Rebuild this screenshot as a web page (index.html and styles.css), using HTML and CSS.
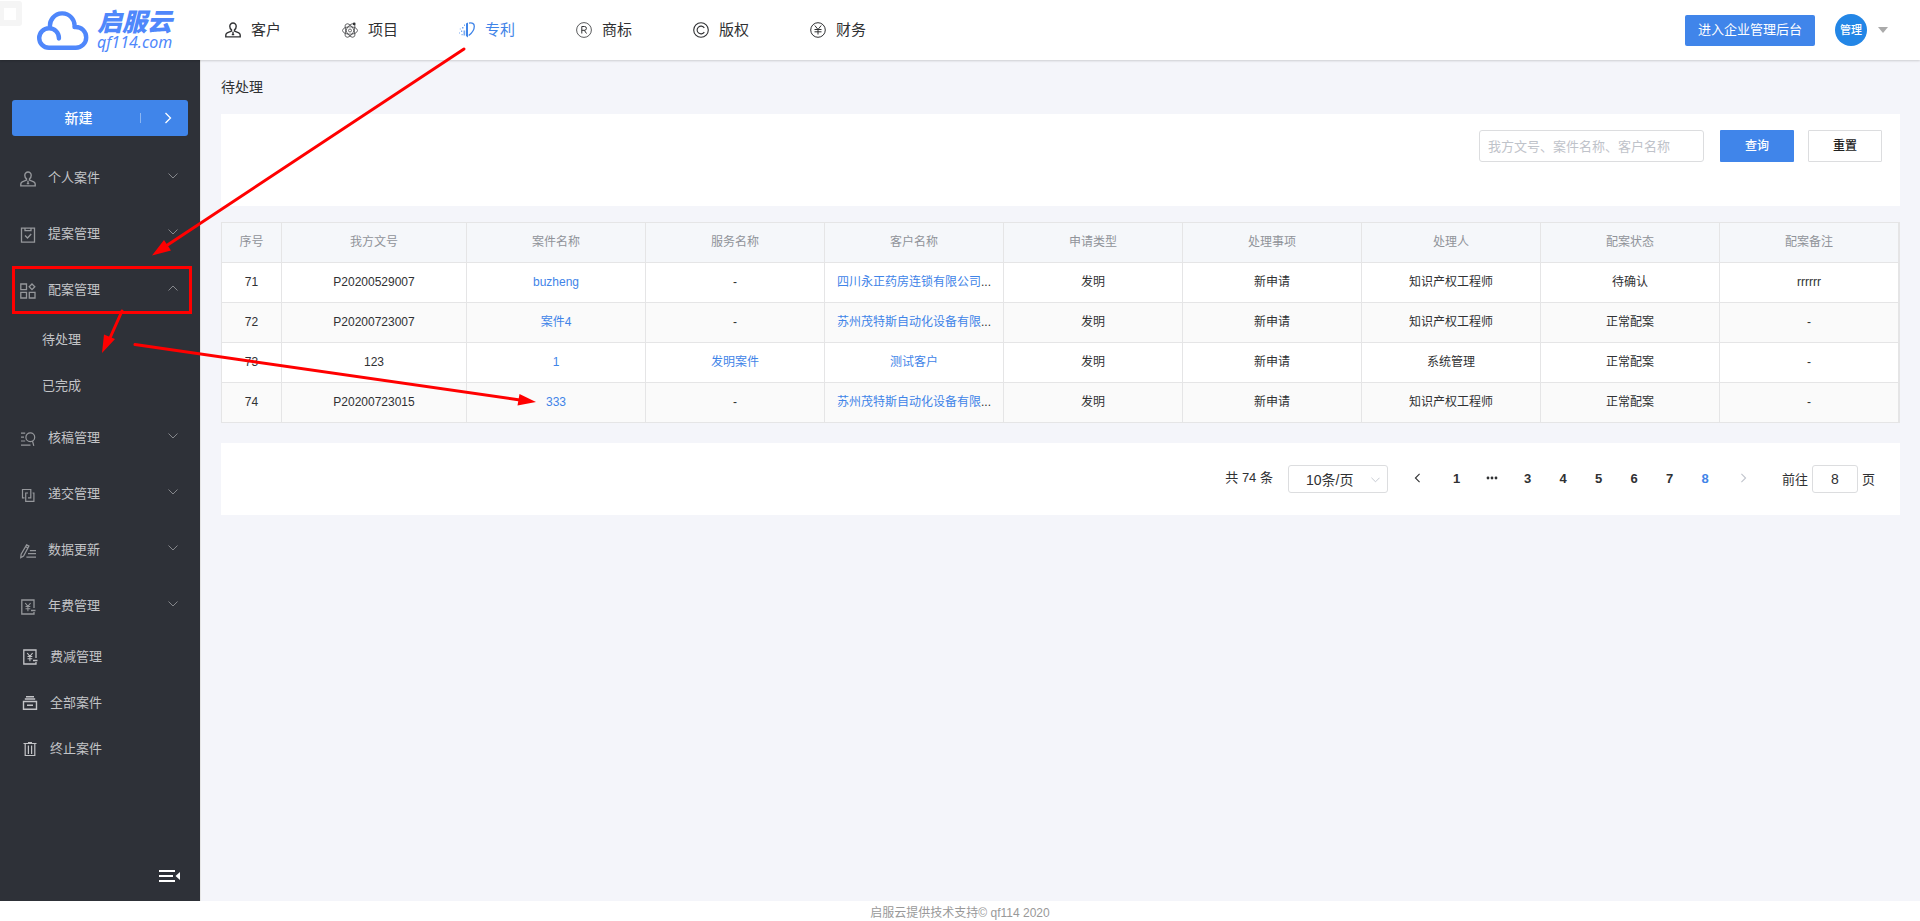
FILE: index.html
```html
<!DOCTYPE html>
<html lang="zh-CN">
<head>
<meta charset="utf-8">
<title>启服云 - 待处理</title>
<link rel="stylesheet" href="styles.css">
</head>
<body>
<svg class="sprite" aria-hidden="true">
  <symbol id="i-user" viewBox="0 0 16 16"><path d="M8 1a3.200 3.200 0 0 0-3.200 3.200c0 1.600.7 2.900 1.700 3.700v1.200L2.200 10.800C1.200 11.300.8 12 .8 13v1.900h14.400V13c0-1-.4-1.700-1.400-2.200L9.500 9.100V7.900c1-.8 1.700-2.100 1.700-3.700A3.200 3.200 0 0 0 8 1zM8 9.800v3M6.800 12.600h2.400" fill="none" stroke="currentColor" stroke-width="1.400"/></symbol>
  <symbol id="i-atom" viewBox="0 0 16 16"><g fill="none" stroke="currentColor" stroke-width=".7"><ellipse cx="8" cy="8.500" rx="7.500" ry="3.700"/><ellipse cx="8" cy="8.500" rx="7.500" ry="3.700" transform="rotate(60 8 8.500)"/><ellipse cx="8" cy="8.500" rx="7.500" ry="3.700" transform="rotate(120 8 8.500)"/><circle cx="8" cy="8.500" r="1.500"/></g><circle cx="12.200" cy="1.900" r="1.400" fill="currentColor"/></symbol>
  <symbol id="i-patent" viewBox="0 0 16 16"><path d="M7 1.500L9 .5v15L7 14z" fill="currentColor"/><path d="M10 1.200c3-.8 5.300.3 5.300 3 0 3.500-2.300 6.800-5.600 9.300" fill="none" stroke="currentColor" stroke-width="1.300"/><path d="M4.500 8.500h1.700v5H4.500zM3 5h1.500v1.500H3zM5 2.500h1V4H5zM2 8.500h1.200V10H2zM0 10.500h1v1H0zM2.500 12h1.200v1.200H2.500zM.8 6.500h.9v.9H.8z" fill="currentColor" opacity=".7"/></symbol>
  <symbol id="i-reg" viewBox="0 0 16 16"><g fill="none" stroke="currentColor"><circle cx="8" cy="8" r="7.400" stroke-width=".8"/><path d="M5.800 11.500v-7H8.500a1.900 1.900 0 0 1 0 3.800H5.800M8.300 8.300l2.200 3.200" stroke-width="1"/></g></symbol>
  <symbol id="i-copy" viewBox="0 0 16 16"><g fill="none" stroke="currentColor" stroke-width="1.100"><circle cx="8" cy="8" r="7.300"/><path d="M11.300 5.900a3.900 3.900 0 1 0 0 4.200"/></g></symbol>
  <symbol id="i-yen" viewBox="0 0 16 16"><g fill="none" stroke="currentColor" stroke-width="1"><circle cx="8" cy="8" r="7.300"/><path d="M4.800 3.500L8 7.500l3.200-4M8 7.500v5M4.500 7.500h7M4.500 9.800h7"/></g></symbol>
  <symbol id="i-clip" viewBox="0 0 16 16"><g fill="none" stroke="currentColor" stroke-width="1.300"><path d="M1.500 1.200h13v14h-13zM5 1.200v2.500h6V1.200"/><path d="M5 8.500l2.500 2.500L11.200 7"/></g></symbol>
  <symbol id="i-grid" viewBox="0 0 16 16"><g fill="none" stroke="currentColor" stroke-width="1.300"><path d="M.8 1h5.700v5.700H.8zM.8 9.300h5.700V15H.8zM9.300 9.300H15V15H9.300zM12 1l2.800 2.800L12 6.600 9.200 3.800z"/></g></symbol>
  <symbol id="i-review" viewBox="0 0 16 16"><g fill="none" stroke="currentColor" stroke-width="1.200"><circle cx="10.300" cy="6.200" r="4.400"/><path d="M1 2.200h4.200M1 6.200h3M1 10h4.200M1 14.200h9.500M12.500 10l1.300 4.800"/></g></symbol>
  <symbol id="i-send" viewBox="0 0 16 16"><path d="M4.500 10.800h-2V2.500h8.300v8.300H8M8 6H5.700v8.300h8.200V6h-1.300" fill="none" stroke="currentColor" stroke-width="1.200"/></symbol>
  <symbol id="i-edit" viewBox="0 0 17 16"><g fill="none" stroke="currentColor" stroke-width="1.300"><path d="M7 1.500l2.500 1.300-5.700 10.500L.8 15l.4-3.500zM6 3.500l2.500 1.300"/><path d="M10.500 7.500H17M8.500 10.800H17M6.800 14.400H17"/></g></symbol>
  <symbol id="i-fee" viewBox="0 0 16 16"><g fill="none" stroke="currentColor" stroke-width="1.300"><path d="M14 9V1H1.800v14H14v-2M11 11.500h4.500"/><path d="M5.200 4l2.700 3.300L10.600 4M7.900 7.300v5M5.500 7.500h4.800M5.500 9.700h4.800" stroke-width="1.100"/></g></symbol>
  <symbol id="i-all" viewBox="0 0 16 16"><path d="M4 1h8v1.500H4zM2.800 3.200h10.400v1.500H2.800z" fill="currentColor"/><path d="M1.500 6.500h13v7.800h-13zM5 10.300h6" fill="none" stroke="currentColor" stroke-width="1.400"/></symbol>
  <symbol id="i-trash" viewBox="0 0 16 16"><path d="M1.500 2.500h13M3.200 2.500v12h9.600v-12M6.400 4.500v8.500M9.600 4.500v8.500M6 1.500h4" fill="none" stroke="currentColor" stroke-width="1.200"/></symbol>
  <symbol id="i-down" viewBox="0 0 10 10"><path d="M.5 2.500L5 7l4.500-4.500" fill="none" stroke="currentColor"/></symbol>
  <symbol id="i-up" viewBox="0 0 10 10"><path d="M.5 7.500L5 3l4.500 4.500" fill="none" stroke="currentColor"/></symbol>
  <symbol id="i-right" viewBox="0 0 10 12"><path d="M2.500 1l5 5-5 5" fill="none" stroke="currentColor" stroke-width="1.300"/></symbol>
  <symbol id="i-left" viewBox="0 0 10 12"><path d="M7.500 1l-5 5 5 5" fill="none" stroke="currentColor" stroke-width="1.300"/></symbol>
</svg>

<header class="header">
  <span class="badge"></span>
  <a class="logo" href="#" aria-label="启服云">
    <svg class="logo-cloud" viewBox="0 0 53 40"><path d="M22.900 28.500A9.800 9.800 0 0 0 13 18.200a9.800 9.800 0 0 0 0 19.600H39.800a10.400 10.400 0 0 0 0-20.800H38.500A12.300 12.300 0 1 0 14.100 17.500" fill="none" stroke="#4f87fb" stroke-width="4.400" stroke-linecap="round" stroke-linejoin="round"/></svg>
    <span class="logo-text"><span class="logo-name">启服云</span><span class="logo-domain">qf114.com</span></span>
  </a>
  <nav class="nav">
    <a href="#"><svg><use href="#i-user"/></svg>客户</a>
    <a href="#"><svg><use href="#i-atom"/></svg>项目</a>
    <a href="#" class="active"><svg><use href="#i-patent"/></svg>专利</a>
    <a href="#"><svg><use href="#i-reg"/></svg>商标</a>
    <a href="#"><svg><use href="#i-copy"/></svg>版权</a>
    <a href="#"><svg><use href="#i-yen"/></svg>财务</a>
  </nav>
  <button class="btn btn-admin" type="button">进入企业管理后台</button>
  <button class="account" type="button"><span class="avatar">管理</span><span class="caret"></span></button>
</header>

<div class="layout">
  <aside class="sidebar">
    <button class="create" type="button"><span class="create-label">新建</span><span class="create-more"><svg><use href="#i-right"/></svg></span></button>
    <nav class="menu">
      <a href="#" class="item"><svg class="icon"><use href="#i-user"/></svg>个人案件<svg class="arrow"><use href="#i-down"/></svg></a>
      <a href="#" class="item"><svg class="icon"><use href="#i-clip"/></svg>提案管理<svg class="arrow"><use href="#i-down"/></svg></a>
      <a href="#" class="item"><svg class="icon"><use href="#i-grid"/></svg>配案管理<svg class="arrow"><use href="#i-up"/></svg></a>
      <a href="#" class="sub">待处理</a>
      <a href="#" class="sub">已完成</a>
      <a href="#" class="item"><svg class="icon"><use href="#i-review"/></svg>核稿管理<svg class="arrow"><use href="#i-down"/></svg></a>
      <a href="#" class="item"><svg class="icon"><use href="#i-send"/></svg>递交管理<svg class="arrow"><use href="#i-down"/></svg></a>
      <a href="#" class="item"><svg class="icon"><use href="#i-edit"/></svg>数据更新<svg class="arrow"><use href="#i-down"/></svg></a>
      <a href="#" class="item"><svg class="icon"><use href="#i-fee"/></svg>年费管理<svg class="arrow"><use href="#i-down"/></svg></a>
      <a href="#" class="item single"><svg class="icon"><use href="#i-fee"/></svg>费减管理</a>
      <a href="#" class="item single"><svg class="icon"><use href="#i-all"/></svg>全部案件</a>
      <a href="#" class="item single"><svg class="icon"><use href="#i-trash"/></svg>终止案件</a>
    </nav>
    <button class="collapse" type="button" aria-label="收起菜单"><svg viewBox="0 0 21 12"><path d="M0 1h16M0 6h14M0 11h16" stroke="#fff" stroke-width="2"/><path d="M21 2v8l-4.500-4z" fill="#fff"/></svg></button>
  </aside>

  <main class="main">
    <h1 class="title">待处理</h1>
    <form class="panel search">
      <input class="search-input" type="text" aria-label="搜索" placeholder="我方文号、案件名称、客户名称">
      <button class="btn btn-query" type="button">查询</button>
      <button class="btn btn-reset" type="reset">重置</button>
    </form>

    <table class="table">
      <colgroup><col class="c-no"><col class="c-ref"><col><col><col><col><col><col><col><col></colgroup>
      <thead>
        <tr><th>序号</th><th>我方文号</th><th>案件名称</th><th>服务名称</th><th>客户名称</th><th>申请类型</th><th>处理事项</th><th>处理人</th><th>配案状态</th><th>配案备注</th></tr>
      </thead>
      <tbody>
        <tr><td>71</td><td>P20200529007</td><td><a href="#">buzheng</a></td><td>-</td><td><a href="#">四川永正药房连锁有限公司</a>...</td><td>发明</td><td>新申请</td><td>知识产权工程师</td><td>待确认</td><td>rrrrrr</td></tr>
        <tr><td>72</td><td>P20200723007</td><td><a href="#">案件4</a></td><td>-</td><td><a href="#">苏州茂特斯自动化设备有限</a>...</td><td>发明</td><td>新申请</td><td>知识产权工程师</td><td>正常配案</td><td>-</td></tr>
        <tr><td>73</td><td>123</td><td><a href="#">1</a></td><td><a href="#">发明案件</a></td><td><a href="#">测试客户</a></td><td>发明</td><td>新申请</td><td>系统管理</td><td>正常配案</td><td>-</td></tr>
        <tr><td>74</td><td>P20200723015</td><td><a href="#">333</a></td><td>-</td><td><a href="#">苏州茂特斯自动化设备有限</a>...</td><td>发明</td><td>新申请</td><td>知识产权工程师</td><td>正常配案</td><td>-</td></tr>
      </tbody>
    </table>

    <div class="panel pager">
      <span class="total">共 74 条</span>
      <span class="size"><select aria-label="每页条数"><option>10条/页</option></select><svg><use href="#i-down"/></svg></span>
      <button class="step" type="button" aria-label="上一页"><svg><use href="#i-left"/></svg></button>
      <div class="pages">
        <button type="button">1</button>
        <button type="button" aria-label="更多"><svg viewBox="0 0 12 4"><circle cx="2" cy="2" r="1.400"/><circle cx="6" cy="2" r="1.400"/><circle cx="10" cy="2" r="1.400"/></svg></button>
        <button type="button">3</button>
        <button type="button">4</button>
        <button type="button">5</button>
        <button type="button">6</button>
        <button type="button">7</button>
        <button type="button" class="current">8</button>
      </div>
      <button class="step" type="button" aria-label="下一页" disabled><svg><use href="#i-right"/></svg></button>
      <label class="jump">前往<input type="text" value="8">页</label>
    </div>
  </main>
</div>

<footer class="footer">启服云提供技术支持© qf114 2020</footer>

<svg class="guide" width="560" height="420" viewBox="0 0 560 420" aria-hidden="true">
  <g fill="none" stroke="#f00" stroke-width="3"><path d="M13.500 267.500h177v45h-177z"/><path d="M464 49L166 246M122 311l-12 27M135 344.500l385 55.500" stroke-linecap="round"/></g>
  <path d="M152 255.500l12-15.500 7 10.500zM102 353l2-18.500 11 4.500zM536 402l-16.500-8-2 11.500z" fill="#f00"/>
</svg>
</body>
</html>
```
FILE: styles.css
```css
* { box-sizing: border-box; }
body {
  margin: 0;
  min-height: 100vh;
  position: relative;
  display: flex;
  flex-direction: column;
  background: #fff;
  color: #303133;
  font: 13px/20px "Liberation Sans", "Noto Sans CJK SC", sans-serif;
}
a { color: inherit; text-decoration: none; }
button, input, select { font: inherit; color: inherit; }
button { border: 0; padding: 0; background: none; cursor: pointer; }
svg { display: block; flex: none; }
.sprite { position: absolute; width: 0; height: 0; }

.header {
  position: relative;
  z-index: 1;
  display: flex;
  align-items: center;
  height: 60px;
  padding: 0 32px 0 36px;
  background: #fff;
  box-shadow: 0 1px 2px rgba(0, 0, 0, .16);
}
.badge {
  position: absolute;
  left: 0;
  top: 1px;
  width: 22px;
  height: 25px;
  border: solid #f5f5f5;
  border-width: 7px 6px 6px 4px;
  border-radius: 0 3px 3px 0;
}
.logo { display: flex; width: 189px; gap: 8px; align-items: center; color: #4f87fb; }
.logo-cloud { width: 53px; height: 40px; }
.logo-text { display: flex; flex-direction: column; font-style: italic; }
.logo-name { font-size: 25px; line-height: 24px; font-weight: 900; }
.logo-domain { font: italic 16px/16px "Noto Sans", sans-serif; }
.nav { display: flex; gap: 61px; font-size: 15px; flex: 1; }
.nav a { display: flex; align-items: center; gap: 10px; }
.nav svg { width: 16px; height: 16px; }
.nav .active { color: #3f84e8; }

.btn { border-radius: 2px; background: #4085ea; color: #fff; }
.btn-admin { width: 130px; height: 31px; }
.account { display: flex; align-items: center; gap: 11px; margin-left: 20px; }
.avatar { width: 32px; height: 32px; border-radius: 50%; background: #2386e6; color: #fff; font-size: 11px; line-height: 32px; font-weight: 500; }
.caret { border: solid transparent; border-width: 6px 5px 0; border-top-color: #aaa; }

.layout { flex: 1; display: flex; }
.sidebar { display: flex; flex-direction: column; width: 201px; padding-top: 40px; background: #2e3138; border-right: 1px solid #e6e6e6; color: #c3c4c7; }
.create { display: flex; align-items: center; height: 36px; margin: 0 12px 14px; border-radius: 3px; background: #4085ea; color: #fff; }
.create-label { width: 128px; padding-left: 5px; text-align: center; font-size: 14px; font-weight: 500; }
.create-more { display: flex; flex: 1; height: 10px; align-items: center; padding-left: 22px; border-left: 1px solid #8cb6f2; }
.create svg { width: 10px; height: 12px; }
.menu { flex: 1; }
.item { display: flex; align-items: center; height: 56px; padding: 0 22px 0 20px; gap: 12px; }
.item .icon { width: 16px; height: 16px; margin-top: 2px; color: #95979b; }
.item .arrow { width: 10px; height: 10px; margin: 0 0 4px auto; color: #85878b; }
.single { height: 46px; padding-left: 22px; }
.item.single .icon { margin-top: 0; color: #c3c4c7; }
.sub { display: flex; align-items: center; height: 46px; padding: 0 0 2px 42px; }
.collapse { align-self: flex-end; margin: 0 20px 19px 0; }
.collapse svg { width: 21px; height: 12px; }

.main { flex: 1; min-width: 0; padding: 16px 20px; background: #f4f5fa; }
.title { margin: 0 0 16px; font-size: 14px; line-height: 22px; font-weight: 400; }
.panel { display: flex; background: #fff; }
.search { justify-content: flex-end; padding: 16px 18px 44px; margin-bottom: 16px; }
.search-input { width: 225px; height: 32px; margin-right: 16px; padding: 0 8px; border: 1px solid #dcdddf; border-radius: 3px; background: #fff; outline: 0; }
.search-input::placeholder { color: #bfc3ca; opacity: 1; }
.search .btn { width: 74px; height: 32px; font-size: 12px; font-weight: 500; }
.search .btn-query { margin-right: 14px; border-radius: 1px; }
.search .btn-reset { border: 1px solid #dcdddf; background: #fff; color: #222; border-radius: 1px; }

.table { width: 100%; margin-bottom: 20px; table-layout: fixed; border-collapse: separate; border-spacing: 0; border: solid #e5e5e6; border-width: 1px 1px 0; font-size: 12px; text-align: center; }
.c-no { width: 60px; }
.c-ref { width: 185px; }
.table th, .table td { height: 40px; padding: 0 0 2px; border: solid #e5e5e6; border-width: 0 1px 1px 0; white-space: nowrap; overflow: hidden; background: #fff; }
.table th { background: #f5f7fa; color: #909399; font-weight: 400; }
.table tr:nth-child(even) td { background: #fafafa; }
.table a { color: #3f84e8; }

.pager { justify-content: flex-end; padding: 22px 25px; line-height: 28px; }
.total { line-height: 26px; margin-right: 15px; }
.size { position: relative; width: 100px; margin-right: 17px; }
.size select { display: block; width: 100%; height: 28px; padding: 0 17px; border: 1px solid #dcdddf; border-radius: 3px; background: #fff; appearance: none; font-size: 14px; }
.size svg { position: absolute; right: 8px; top: 10px; width: 9px; height: 10px; color: #c0c4cc; }
.step { display: flex; justify-content: center; align-items: center; width: 26px; height: 26px; }
.step svg { width: 9px; height: 10px; }
.step:disabled { color: #c0c4cc; }
.pages { display: grid; grid-template-columns: repeat(8, 1fr); width: 284px; margin: 0 8px; font-weight: 700; }
.pages button { height: 26px; }
.pages svg { width: 12px; height: 4px; margin: auto; fill: currentColor; }
.pages .current { color: #3f84e8; }
.jump { display: flex; gap: 4px; height: 28px; margin-left: 25px; line-height: 30px; }
.jump input { width: 46px; height: 28px; border: 1px solid #dcdddf; border-radius: 3px; text-align: center; font-size: 14px; }

.footer { height: 20px; padding-top: 4px; line-height: 16px; font-size: 12px; text-align: center; color: #999; }
.guide { position: absolute; left: 0; top: 0; z-index: 2; pointer-events: none; }
```
